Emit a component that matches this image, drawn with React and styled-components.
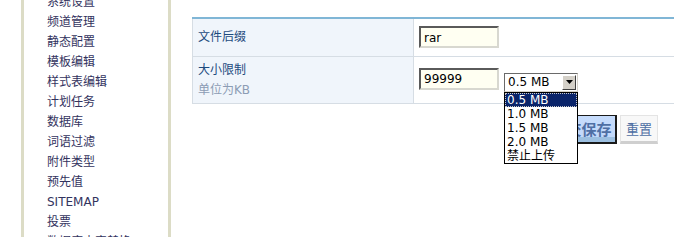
import React from 'react';
import styled, { createGlobalStyle } from 'styled-components';

const GlobalStyle = createGlobalStyle`
  html, body {
    margin: 0;
    padding: 0;
    background: #fff;
    overflow: hidden;
  }
  body {
    font-family: "DejaVu Sans", "Noto Sans CJK SC", sans-serif;
    font-size: 12px;
  }
`;

const menuItems = [
  '系统设置', '频道管理', '静态配置', '模板编辑', '样式表编辑', '计划任务',
  '数据库', '词语过滤', '附件类型', '预先值', 'SITEMAP', '投票', '数据库内容替换',
];

const sizeOptions = ['0.5 MB', '1.0 MB', '1.5 MB', '2.0 MB', '禁止上传'];

export default function App() {
  return (
    <Page>
      <GlobalStyle />
      <Sidebar>
        <Menu>
          {menuItems.map(item => (
            <MenuItem key={item}>{item}</MenuItem>
          ))}
        </Menu>
      </Sidebar>

      <Main>
        <FormTable>
          <tbody>
            <Row rowHeight={38}>
              <LabelCell>
                <Label>文件后缀</Label>
              </LabelCell>
              <ValueCell>
                <TextInput defaultValue="rar" />
              </ValueCell>
            </Row>
            <Row rowHeight={47}>
              <LabelCell>
                <Label>大小限制</Label>
                <Hint>单位为KB</Hint>
              </LabelCell>
              <ValueCell>
                <FieldLine>
                  <TextInput defaultValue="99999" />
                  <SelectWrap>
                    <SelectBox>
                      <SelectValue>0.5 MB</SelectValue>
                      <ArrowButton>
                        <svg width="7" height="4" viewBox="0 0 7 4">
                          <path d="M0 0h7L3.5 4z" fill="#000" />
                        </svg>
                      </ArrowButton>
                    </SelectBox>
                    <OptionList>
                      {sizeOptions.map((opt, i) => (
                        <Option key={opt} selected={i === 0}>{opt}</Option>
                      ))}
                    </OptionList>
                  </SelectWrap>
                </FieldLine>
              </ValueCell>
            </Row>
          </tbody>
        </FormTable>

        <ButtonRow>
          <SubmitButton>提交保存</SubmitButton>
          <ResetButton>重置</ResetButton>
        </ButtonRow>
      </Main>
    </Page>
  );
}

const Page = styled.div`
  display: flex;
  width: 674px;
  height: 237px;
  overflow: hidden;
`;

const Sidebar = styled.div`
  flex: none;
  width: 144px;
  margin-left: 21px;
  height: 237px;
  border-left: 3px solid #dcdcc6;
  border-right: 3px solid #dcdcc6;
  overflow: hidden;
`;

const Menu = styled.ul`
  list-style: none;
  margin: -8px 0 0;
  padding: 0 0 0 23px;
`;

const MenuItem = styled.li`
  height: 20px;
  line-height: 20px;
  font-size: 12px;
  color: #33335e;
  white-space: nowrap;
`;

const Main = styled.div`
  flex: 1;
  min-width: 0;
  padding: 17px 0 0 21px;
`;

const FormTable = styled.table`
  width: 100%;
  border-collapse: collapse;
  border-top: 2px solid #80b6d6;
  border-left: 1px solid #d6dde4;
`;

const Row = styled.tr`
  height: ${props => props.rowHeight}px;
  border-bottom: 1px solid #d6dde4;
`;

const LabelCell = styled.td`
  box-sizing: border-box;
  width: 221px;
  padding: 0 8px 0 5px;
  background: #f0f5fb;
  border-right: 1px solid #d6dde4;
  vertical-align: middle;
`;

const Label = styled.div`
  color: #1c4a7e;
  font-size: 12px;
  line-height: 20px;
`;

const Hint = styled.div`
  color: #8c9cb4;
  font-size: 12px;
  line-height: 20px;
`;

const ValueCell = styled.td`
  padding: 0 5px;
  vertical-align: middle;
`;

const FieldLine = styled.div`
  display: flex;
  align-items: flex-start;
  gap: 5px;
`;

const TextInput = styled.input`
  display: block;
  box-sizing: border-box;
  width: 80px;
  height: 22px;
  margin: 0;
  padding: 1px 3px 0;
  background: #fffff2;
  border: 2px solid;
  border-color: #5a5a5a #d8d8d0 #d8d8d0 #5a5a5a;
  font-family: "DejaVu Sans", sans-serif;
  font-size: 12px;
  color: #000;
  outline: none;
`;

const SelectWrap = styled.div`
  position: relative;
  margin-top: 5px;
`;

const SelectBox = styled.div`
  box-sizing: border-box;
  display: flex;
  align-items: center;
  width: 74px;
  height: 19px;
  border: 1px solid;
  border-color: #6a6a6a #d4d0c8 #d4d0c8 #6a6a6a;
  background: #fff;
`;

const SelectValue = styled.span`
  flex: 1;
  padding-left: 3px;
  font-size: 12px;
  color: #000;
`;

const ArrowButton = styled.span`
  box-sizing: border-box;
  display: flex;
  align-items: center;
  justify-content: center;
  width: 14px;
  height: 15px;
  margin-right: 1px;
  background: #d4d0c8;
  border: 1px solid;
  border-color: #fff #404040 #404040 #fff;
`;

const OptionList = styled.div`
  position: absolute;
  top: 19px;
  left: 0;
  z-index: 2;
  box-sizing: border-box;
  width: 74px;
  background: #fff;
  border: 1px solid #000;
`;

const Option = styled.div`
  height: 14px;
  line-height: 14px;
  padding-left: 2px;
  font-size: 12px;
  color: ${props => (props.selected ? '#fff' : '#000')};
  background: ${props => (props.selected ? '#0a246a' : '#fff')};
  outline: ${props => (props.selected ? '1px dotted #c8c8c8' : 'none')};
  outline-offset: -1px;
  white-space: nowrap;
`;

const ButtonRow = styled.div`
  display: flex;
  gap: 3px;
  margin-top: 11px;
  padding-left: 357px;
`;

const SubmitButton = styled.button`
  box-sizing: border-box;
  width: 68px;
  height: 29px;
  margin: 0;
  padding: 0 2px 0 0;
  background: linear-gradient(#c6dcfc 0%, #c2d8fa 80%, #9cbfe0 80%, #9cbfe0 100%);
  border: 1px solid #1a1a1a;
  border-right-width: 2px;
  border-bottom-width: 2px;
  font-family: "Noto Sans CJK SC", sans-serif;
  font-size: 15px;
  font-weight: bold;
  color: #4f6fa4;
  white-space: nowrap;
`;

const ResetButton = styled.button`
  box-sizing: border-box;
  width: 38px;
  height: 29px;
  margin: 0;
  padding: 0;
  background: #f8f8f8;
  border: 1px solid #e4e4e4;
  border-bottom: 3px solid #cfcfcf;
  font-family: "Noto Sans CJK SC", sans-serif;
  font-size: 13px;
  color: #4f6fa4;
`;
